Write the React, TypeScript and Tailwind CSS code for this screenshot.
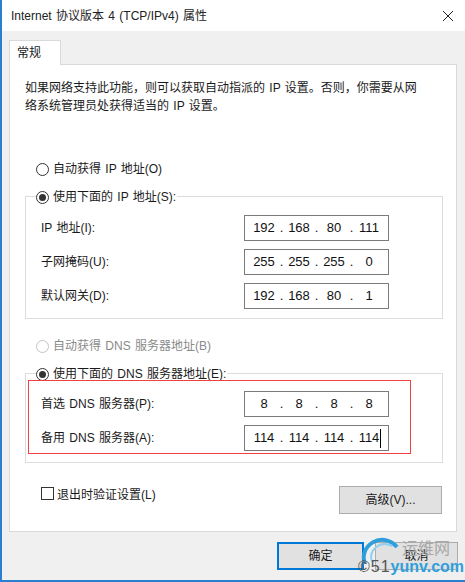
import React from 'react';

const font = "font-['Liberation_Sans','Noto_Sans_CJK_SC',sans-serif]";

// One segment of the IP box: four fixed cells split by dots
const IpBox = ({ parts, caret }: { parts: string[]; caret?: boolean }) => (
  <div className="relative flex h-[26px] w-[145px] items-center border border-[#7a7a7a] bg-white pl-[6px] text-[13px] text-[#111]">
    {parts.map((p, i) => (
      <React.Fragment key={i}>
        <span className="w-[26px] text-center">{p}</span>
        {i < 3 && <span className="w-[9px] text-center">.</span>}
      </React.Fragment>
    ))}
    {caret && <span className="absolute left-[135px] top-[3px] h-[19px] w-px bg-black" />}
  </div>
);

const Row = ({ label, parts, caret }: { label: string; parts: string[]; caret?: boolean }) => (
  <div className="flex h-[26px] items-center justify-between">
    <span>{label}</span>
    <IpBox parts={parts} caret={caret} />
  </div>
);

const Radio = ({ on, off }: { on?: boolean; off?: boolean }) => (
  <span
    className={`flex h-[13px] w-[13px] shrink-0 items-center justify-center rounded-full border bg-white ${
      off ? 'border-[#c4c4c4]' : 'border-[#333]'
    }`}
  >
    {on && <span className="h-[7px] w-[7px] rounded-full bg-[#333]" />}
  </span>
);

const Group = ({ legend, children, className }: { legend: string; children: React.ReactNode; className: string }) => (
  <div className={`ml-[15px] w-[418px] border border-[#dcdcdc] ${className}`}>
    <div className="-mt-[9px] ml-[10px] flex h-[18px] w-fit items-center gap-[4px] bg-white pr-[1px]">
      <Radio on />
      <span>{legend}</span>
    </div>
    {children}
  </div>
);

export default function App() {
  return (
    <div className={`relative flex h-[582px] w-[465px] flex-col overflow-hidden bg-white text-[12px] leading-[18px] text-[#1a1a1a] [word-spacing:1px] ${font}`}>
      <div className="flex h-full flex-col border-b-2 border-l-2 border-[#2b7fd0]">
        {/* Title bar */}
        <div className="flex h-[31px] shrink-0 items-center justify-between bg-white pl-[9px] pr-[11px] text-[#222]">
          <span>Internet 协议版本 4 (TCP/IPv4) 属性</span>
          <svg width="12" height="12" viewBox="0 0 12 12" stroke="#222" strokeWidth="1" fill="none">
            <path d="M1 1l10 10M11 1L1 11" />
          </svg>
        </div>

        {/* Dialog body */}
        <div className="flex flex-1 flex-col bg-[#f0f0f0] pl-[7px] pt-[9px]">
          <div className="z-10 -mb-px flex h-[25px] w-[52px] items-center border border-b-0 border-[#d9d9d9] bg-white pl-[7px]">
            常规
          </div>

          <div className="flex h-[468px] w-[448px] flex-col border border-[#d9d9d9] bg-white">
            <p className="ml-[15px] mt-[14px] whitespace-nowrap">
              如果网络支持此功能，则可以获取自动指派的 IP 设置。否则，你需要从网
              <br />
              络系统管理员处获得适当的 IP 设置。
            </p>

            <div className="ml-[26px] mt-[45px] flex h-[18px] items-center gap-[4px]">
              <Radio />
              <span>自动获得 IP 地址(O)</span>
            </div>

            <Group legend="使用下面的 IP 地址(S):" className="mt-[18px] h-[123px]">
              <div className="flex flex-col gap-[8px] pl-[15px] pr-[53px] pt-[9px]">
                <Row label="IP 地址(I):" parts={['192', '168', '80', '111']} />
                <Row label="子网掩码(U):" parts={['255', '255', '255', '0']} />
                <Row label="默认网关(D):" parts={['192', '168', '80', '1']} />
              </div>
            </Group>

            <div className="ml-[26px] mt-[18px] flex h-[18px] items-center gap-[4px] text-[#8a8a8a]">
              <Radio off />
              <span>自动获得 DNS 服务器地址(B)</span>
            </div>

            <Group legend="使用下面的 DNS 服务器地址(E):" className="mt-[18px] h-[90px]">
              <div className="flex flex-col gap-[8px] pl-[15px] pr-[53px] pt-[8px]">
                <Row label="首选 DNS 服务器(P):" parts={['8', '8', '8', '8']} />
                <Row label="备用 DNS 服务器(A):" parts={['114', '114', '114', '114']} caret />
              </div>
            </Group>

            <div className="mt-[23px] flex items-start pl-[31px] pr-[14px]">
              <span className="mt-[1px] h-[13px] w-[13px] border border-[#333] bg-white" />
              <span className="ml-[3px] flex-1">退出时验证设置(L)</span>
              <button className="h-[28px] w-[103px] border border-[#adadad] bg-[#e1e1e1]">高级(V)...</button>
            </div>
          </div>

          <div className="mt-[10px] flex pl-[268px]">
            <button className="h-[28px] w-[87px] border-2 border-[#0078d7] bg-[#e1e1e1]">确定</button>
            <button className="ml-[11px] h-[28px] w-[83px] border border-[#adadad] bg-[#e1e1e1]">取消</button>
          </div>
        </div>
      </div>

      {/* Red annotation drawn over the screenshot */}
      <div className="absolute left-[28px] top-[380px] h-[74px] w-[383px] border border-[#f04040]" />

      {/* Watermark */}
      <div className="absolute left-[358px] top-[534px] h-[48px] w-[107px] [word-spacing:0]">
        <svg className="absolute left-0 top-0" width="50" height="48" viewBox="0 0 50 48" fill="none">
          <path d="M7 30C0 12 24 -4 39 13" stroke="#2f9fdc" strokeWidth="4" />
          <path d="M14 28C10 16 22 6 34 12" stroke="#8fd0ee" strokeWidth="2" />
        </svg>
        <span className="absolute left-[44px] top-[6px] text-[16px] leading-[18px] text-[#a8a8a8]">运维网</span>
        <span className="absolute left-0 top-[24px] whitespace-nowrap text-[16px] font-bold leading-[18px] text-[#2f9fdc]">
          <span className="font-normal tracking-[1px] text-[#555]">©51</span>yunv.com
        </span>
      </div>
    </div>
  );
}
